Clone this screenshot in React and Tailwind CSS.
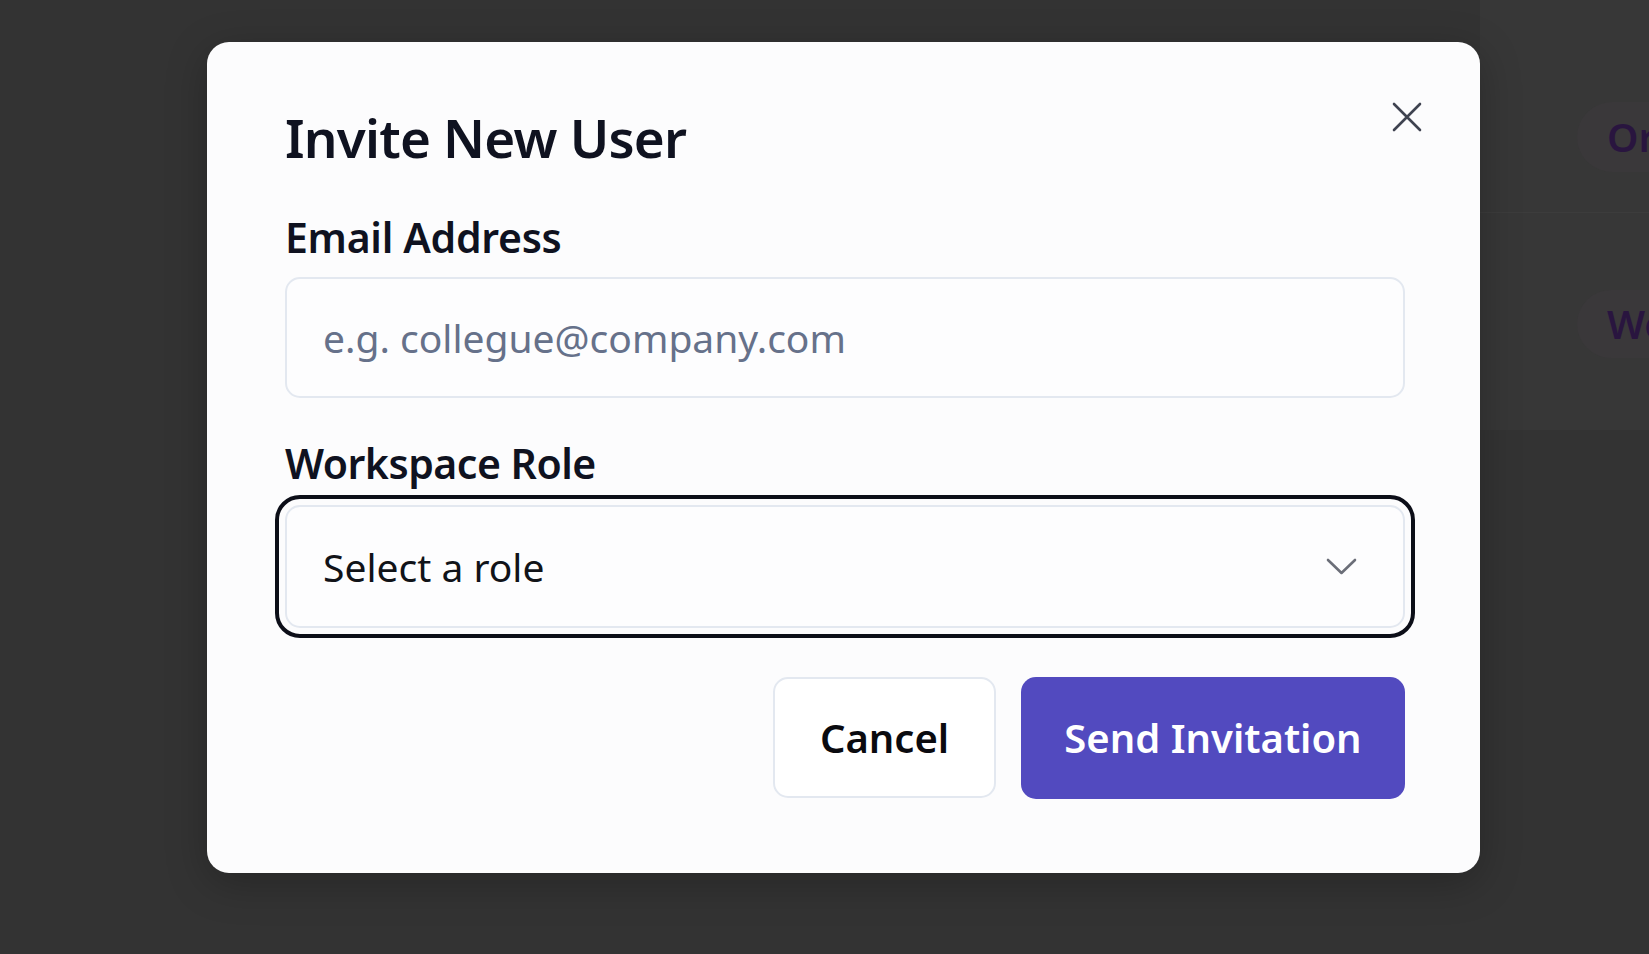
import React from "react";

export default function App() {
  return (
    <div
      className="relative h-[954px] w-[1649px] overflow-hidden bg-[#333333]"
      style={{ fontFamily: '"Noto Sans", "Open Sans", sans-serif' }}
    >
      {/* background page content (dimmed) */}
      <div className="flex h-full items-start justify-end">
        <div className="flex h-[430px] w-[169px] flex-col overflow-hidden bg-[#373737]">
          <div className="flex h-[213px] shrink-0 items-end border-b border-[#3c3c3c] pb-[40px] pl-[97px]">
            <span className="whitespace-nowrap rounded-full bg-[#3a383a] px-[30px] py-[8px] text-[40px] font-semibold leading-[54px] text-[#29153f]">
              Organization Admin
            </span>
          </div>
          <div className="flex h-[217px] shrink-0 items-start pt-[77px] pl-[97px]">
            <span className="whitespace-nowrap rounded-full bg-[#3a383a] px-[30px] py-[7px] text-[40px] font-semibold leading-[54px] text-[#29153f]">
              Workspace Member
            </span>
          </div>
        </div>
      </div>

      {/* modal */}
      <div className="absolute left-[207px] top-[42px] h-[831px] w-[1273px] rounded-[22px] bg-[#fcfcfd] pl-[78px] pr-[75px] pt-[68px] shadow-[0_10px_40px_rgba(0,0,0,0.25)]">
        <button className="absolute right-[58px] top-[60px] flex h-[30px] w-[30px] items-center justify-center text-[#3f4350]">
          <svg width="30" height="30" viewBox="0 0 30 30" fill="none">
            <path d="M2 2 L28 28 M28 2 L2 28" stroke="currentColor" strokeWidth="2.6" strokeLinecap="round" />
          </svg>
        </button>

        <h2 className="text-[53px] font-semibold leading-[56px] tracking-[-0.8px] text-[#0f1220]">
          Invite New User
        </h2>

        <div className="mt-[50px] text-[41px] font-semibold leading-[42px] tracking-[-0.3px] text-[#0f1220]">
          Email Address
        </div>
        <div className="mt-[19px] flex h-[121px] items-center rounded-[15px] border-2 border-[#e3e8f0] bg-[#fdfdfe] pl-[36px]">
          <span className="text-[39px] leading-[40px] text-[#66718a]">e.g. collegue@company.com</span>
        </div>

        <div className="mt-[44px] text-[41px] font-semibold leading-[42px] tracking-[-0.5px] text-[#0f1220]">
          Workspace Role
        </div>
        <div className="mt-[21px] flex h-[123px] items-center justify-between rounded-[15px] border-2 border-[#e3e8f0] bg-[#fdfdfe] pl-[36px] pr-[46px] outline-4 outline-offset-[6px] outline-[#0c0e18]">
          <span className="text-[39px] leading-[40px] text-[#111318]">Select a role</span>
          <svg width="31" height="17" viewBox="0 0 31 17" fill="none">
            <path d="M2 2 L15.5 15 L29 2" stroke="#6b6e78" strokeWidth="2.6" strokeLinecap="round" strokeLinejoin="round" />
          </svg>
        </div>

        <div className="mt-[49px] flex justify-end gap-[25px]">
          <button className="flex h-[121px] w-[223px] items-center justify-center rounded-[15px] border-2 border-[#e3e8f0] bg-white text-[40px] font-semibold text-[#0a0a0f]">
            Cancel
          </button>
          <button className="flex h-[122px] w-[384px] items-center justify-center rounded-[15px] bg-[#524abf] text-[40px] font-semibold text-white">
            Send Invitation
          </button>
        </div>
      </div>
    </div>
  );
}
